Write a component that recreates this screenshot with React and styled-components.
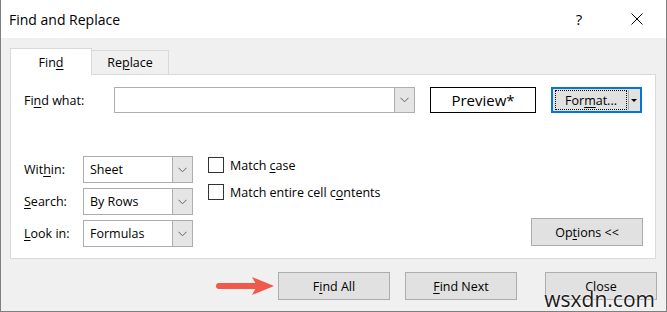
import React from "react";
import styled, { createGlobalStyle } from "styled-components";

const GlobalStyle = createGlobalStyle`
  html, body {
    margin: 0;
    padding: 0;
    background: #fff;
  }
  body {
    font-family: "Open Sans", "Noto Sans", sans-serif;
    font-size: 12.5px;
    color: #111;
  }
  * {
    box-sizing: border-box;
  }
`;

const Window = styled.div`
  position: relative;
  width: 667px;
  height: 312px;
  overflow: hidden;
  background: #f0f0f0;
  border: 1px solid #7f7f7f;
  border-top: none;
  display: flex;
  flex-direction: column;
`;

const TitleBar = styled.div`
  height: 38px;
  flex: none;
  background: #fff;
  display: flex;
  align-items: center;
  padding-left: 8px;
`;

const TitleText = styled.span`
  flex: 1;
  font-size: 14px;
  color: #000;
`;

const TitleButton = styled.div`
  width: 58px;
  height: 38px;
  display: flex;
  align-items: center;
  justify-content: center;
  font-size: 15px;
  color: #000;
`;

const Body = styled.div`
  flex: 1;
  padding: 10px 10px 0 9px;
  display: flex;
  flex-direction: column;
`;

const TabRow = styled.div`
  height: 26px;
  display: flex;
  align-items: flex-end;
`;

const Tab = styled.div`
  display: flex;
  align-items: center;
  justify-content: center;
  width: ${(p) => (p.$active ? 82 : 77)}px;
  height: ${(p) => (p.$active ? 27 : 24)}px;
  margin-bottom: ${(p) => (p.$active ? -1 : 0)}px;
  background: ${(p) => (p.$active ? "#fff" : "#f0f0f0")};
  border: 1px solid #d9d9d9;
  border-bottom: none;
  border-left: ${(p) => (p.$active ? "1px solid #d9d9d9" : "none")};
  position: relative;
  z-index: ${(p) => (p.$active ? 1 : 0)};
  color: #000;
`;

const Panel = styled.div`
  background: #fff;
  border: 1px solid #d9d9d9;
  padding: 12px 12px 11px 13px;
`;

const FindRow = styled.div`
  display: flex;
  align-items: center;
  height: 26px;
`;

const Label = styled.span`
  width: ${(p) => p.$w}px;
  color: #000;
`;

const Combo = styled.div`
  width: ${(p) => p.$w}px;
  height: ${(p) => p.$h}px;
  border: 1px solid #adadad;
  background: #fff;
  display: flex;
  align-items: stretch;
`;

const ComboText = styled.span`
  flex: 1;
  display: flex;
  align-items: center;
  padding-left: 6px;
  color: #000;
`;

const ArrowBox = styled.span`
  width: 20px;
  border-left: 1px solid #adadad;
  background: #e5e5e5;
  display: flex;
  align-items: center;
  justify-content: center;
`;

const Preview = styled.div`
  width: 106px;
  height: 26px;
  margin-left: 15px;
  border: 1px solid #000;
  display: flex;
  align-items: center;
  justify-content: center;
  font-size: 15px;
  color: #000;
`;

const FormatButton = styled.div`
  width: 91px;
  height: 26px;
  margin-left: 15px;
  border: 2px solid #0078d7;
  background: #e1e1e1;
  padding: 1px 1px 1px 2px;
  display: flex;
`;

const FocusRect = styled.span`
  flex: 1;
  border: 1px dotted #000;
  display: flex;
  align-items: center;
  justify-content: center;
  color: #000;
`;

const SplitArrow = styled.span`
  width: 11px;
  border-left: 1px solid #adadad;
  margin-left: 1px;
  display: flex;
  align-items: center;
  justify-content: center;

  &::after {
    content: "";
    border-left: 3px solid transparent;
    border-right: 3px solid transparent;
    border-top: 3px solid #000;
  }
`;

const OptionsArea = styled.div`
  margin-top: 43px;
  display: flex;
  align-items: flex-end;
`;

const SelectGrid = styled.div`
  display: grid;
  grid-template-columns: 59px 110px;
  row-gap: 5px;
  align-items: center;
`;

const CheckGroup = styled.div`
  align-self: flex-start;
  margin-left: 15px;
  padding-top: 1px;
  display: flex;
  flex-direction: column;
  gap: 11px;
`;

const CheckRow = styled.label`
  display: flex;
  align-items: center;
  height: 16px;
  color: #000;
`;

const Box = styled.span`
  width: 16px;
  height: 16px;
  border: 1px solid #333;
  background: #fff;
  margin-right: 6px;
`;

const Button = styled.div`
  width: 112px;
  height: 28px;
  border: 1px solid #adadad;
  background: #e1e1e1;
  display: flex;
  align-items: center;
  justify-content: center;
  color: #000;
  margin-left: ${(p) => p.$ml || 0}px;
`;

const OptionsButton = styled(Button)`
  margin-left: auto;
  margin-bottom: 1px;
`;

const Footer = styled.div`
  margin-top: 13px;
  display: flex;
  justify-content: flex-end;
  align-items: center;
  gap: 15px;
  margin-right: -1px;
`;

const Pointer = styled.svg`
  margin-right: -13px;
`;

const Key = styled.span`
  text-decoration: underline;
  text-underline-offset: 2px;
  text-decoration-thickness: 1px;
`;

const Watermark = styled.div`
  position: absolute;
  right: 11px;
  top: 289px;
  font-size: 21px;
  line-height: 21px;
  color: #1a1a1a;
  text-shadow: 0 0 2px #fff, 0 0 2px #fff;
`;

const Chevron = () => (
  <svg width="9" height="6" viewBox="0 0 9 6">
    <path d="M0.5 0.8 L4.5 4.8 L8.5 0.8" fill="none" stroke="#606060" strokeWidth="1" />
  </svg>
);

const Select = ({ value }) => (
  <Combo $w={110} $h={27}>
    <ComboText>{value}</ComboText>
    <ArrowBox>
      <Chevron />
    </ArrowBox>
  </Combo>
);

export default function App() {
  return (
    <>
      <GlobalStyle />
      <Window>
        <TitleBar>
          <TitleText>Find and Replace</TitleText>
          <TitleButton>?</TitleButton>
          <TitleButton>
            <svg width="12" height="12" viewBox="0 0 12 12">
              <path d="M0.5 0.5 L11.5 11.5 M11.5 0.5 L0.5 11.5" stroke="#000" strokeWidth="1" />
            </svg>
          </TitleButton>
        </TitleBar>
        <Body>
          <TabRow>
            <Tab $active>
              <span>
                Fin<Key>d</Key>
              </span>
            </Tab>
            <Tab>
              <span>
                Re<Key>p</Key>lace
              </span>
            </Tab>
          </TabRow>
          <Panel>
            <FindRow>
              <Label $w={90}>
                Fi<Key>n</Key>d what:
              </Label>
              <Combo $w={301} $h={26}>
                <ComboText />
                <ArrowBox>
                  <Chevron />
                </ArrowBox>
              </Combo>
              <Preview>Preview*</Preview>
              <FormatButton>
                <FocusRect>
                  <span>
                    For<Key>m</Key>at...
                  </span>
                </FocusRect>
                <SplitArrow />
              </FormatButton>
            </FindRow>
            <OptionsArea>
              <SelectGrid>
                <Label>
                  Wit<Key>h</Key>in:
                </Label>
                <Select value="Sheet" />
                <Label>
                  <Key>S</Key>earch:
                </Label>
                <Select value="By Rows" />
                <Label>
                  <Key>L</Key>ook in:
                </Label>
                <Select value="Formulas" />
              </SelectGrid>
              <CheckGroup>
                <CheckRow>
                  <Box />
                  <span>
                    Match <Key>c</Key>ase
                  </span>
                </CheckRow>
                <CheckRow>
                  <Box />
                  <span>
                    Match entire cell c<Key>o</Key>ntents
                  </span>
                </CheckRow>
              </CheckGroup>
              <OptionsButton>
                <span>
                  Op<Key>t</Key>ions &lt;&lt;
                </span>
              </OptionsButton>
            </OptionsArea>
          </Panel>
          <Footer>
            <Pointer width="60" height="20" viewBox="0 0 60 20">
              <line x1="3" y1="10" x2="44" y2="10" stroke="#f15a4b" strokeWidth="6" strokeLinecap="round" />
              <path d="M36 1 L58 10 L36 19 L41 10 Z" fill="#f15a4b" />
            </Pointer>
            <Button>
              <span>
                F<Key>i</Key>nd All
              </span>
            </Button>
            <Button>
              <span>
                <Key>F</Key>ind Next
              </span>
            </Button>
            <Button $ml={13}>Close</Button>
          </Footer>
        </Body>
        <Watermark>wsxdn.com</Watermark>
      </Window>
    </>
  );
}
